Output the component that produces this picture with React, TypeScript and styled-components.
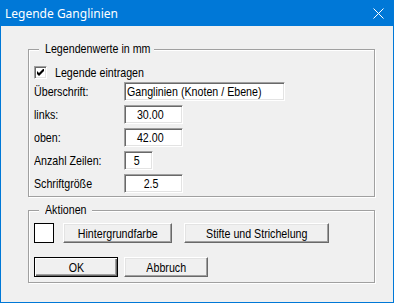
import React from "react";
import styled, { createGlobalStyle } from "styled-components";

const GlobalStyle = createGlobalStyle`
  html, body {
    margin: 0;
    padding: 0;
    background: #f0f0f0;
  }
  body {
    font-family: "Liberation Sans", Arial, sans-serif;
  }
`;

const Window = styled.div`
  width: 394px;
  height: 303px;
  box-sizing: border-box;
  border: 1px solid #0078d7;
  border-top: 0;
  background: #f0f0f0;
  display: flex;
  flex-direction: column;
`;

const TitleBar = styled.div`
  height: 26px;
  flex: none;
  display: flex;
  align-items: center;
  justify-content: space-between;
  padding: 0 9px 0 4px;
  background: #0078d7;
  color: #fff;
  font: 12px "Noto Sans", "Open Sans", sans-serif;
`;

const CloseIcon = () => (
  <svg width="11" height="11" viewBox="0 0 11 11">
    <path d="M0.5 0.5 L10.5 10.5 M10.5 0.5 L0.5 10.5" stroke="#fff" strokeWidth="1" />
  </svg>
);

// the dialog font is a narrow sans; squeeze Liberation Sans to Arial Narrow widths
const Narrow = styled.span<{ $origin?: string }>`
  display: inline-block;
  transform: scaleX(0.82);
  transform-origin: ${p => p.$origin ?? "left"} center;
`;

const Body = styled.div`
  flex: 1;
  display: flex;
  flex-direction: column;
  padding: 15px 18px 0 27px;
  font-size: 13px;
  color: #000;
`;

const Group = styled.fieldset<{ $top: number; $pad: string }>`
  margin: ${p => p.$top}px 0 0;
  padding: ${p => p.$pad};
  min-width: 0;
  border: 1px solid #a0a0a0;
  box-shadow: 1px 1px 0 #fff, inset 1px 1px 0 #fff;
`;

const Caption = styled.legend<{ $width: number }>`
  position: relative;
  box-sizing: border-box;
  width: ${p => p.$width}px;
  margin-left: 5px;
  padding: 0 0 0 6px;
  line-height: 16px;
  white-space: nowrap;
  background: #f0f0f0;
`;

const FormGrid = styled.div`
  display: grid;
  grid-template-columns: 90px 1fr;
  row-gap: 4px;
  align-items: center;
`;

const CheckRow = styled.label`
  grid-column: 1 / -1;
  display: flex;
  align-items: center;
  gap: 8px;
  height: 13px;
  margin-bottom: -1px;
  white-space: nowrap;
`;

const CheckBox = styled.span`
  flex: none;
  width: 13px;
  height: 13px;
  box-sizing: border-box;
  display: flex;
  align-items: center;
  justify-content: center;
  background: #fff;
  border: 1px solid;
  border-color: #a0a0a0 #fff #fff #a0a0a0;
  box-shadow: inset 1px 1px 0 #696969, inset -1px -1px 0 #e3e3e3;
`;

const Label = styled.span`
  line-height: 19px;
  white-space: nowrap;
`;

const Field = styled.div<{ $width: number; $align?: string; $padRight?: number }>`
  width: ${p => p.$width}px;
  height: 19px;
  box-sizing: border-box;
  padding: 0 ${p => p.$padRight ?? 0}px 0 2px;
  background: #fff;
  border: 1px solid;
  border-color: #a0a0a0 #fff #fff #a0a0a0;
  box-shadow: inset 1px 1px 0 #696969, inset -1px -1px 0 #e3e3e3;
  line-height: 17px;
  text-align: ${p => p.$align ?? "left"};
  white-space: nowrap;
  overflow: hidden;
`;

const ActionRow = styled.div`
  display: flex;
  align-items: center;
`;

const Swatch = styled.div`
  width: 20px;
  height: 20px;
  box-sizing: border-box;
  margin-right: 9px;
  background: #fff;
  border: 1px solid #000;
`;

const Button = styled.button<{ $width: number; $default?: boolean }>`
  width: ${p => p.$width}px;
  height: 20px;
  box-sizing: border-box;
  padding: 0;
  font: inherit;
  color: #000;
  white-space: nowrap;
  background: #f0f0f0;
  border: 1px solid;
  border-color: ${p => (p.$default ? "#000" : "#fff #696969 #696969 #fff")};
  box-shadow: ${p =>
    p.$default
      ? "inset 1px 1px 0 #fff, inset -1px -1px 0 #696969, inset -2px -2px 0 #a0a0a0"
      : "inset -1px -1px 0 #a0a0a0, inset 1px 1px 0 #e3e3e3"};

  & + & {
    margin-left: 12px;
  }
`;

const ButtonRow = styled.div`
  display: flex;
  gap: 6px;
  margin-top: 14px;

  ${Button} + ${Button} {
    margin-left: 0;
  }
`;

export default function App() {
  return (
    <>
      <GlobalStyle />
      <Window>
        <TitleBar>
          <span>Legende Ganglinien</span>
          <CloseIcon />
        </TitleBar>
        <Body>
          <Group $top={0} $pad="9px 0 3px 5px">
            <Caption $width={115}>
              <Narrow>Legendenwerte in mm</Narrow>
            </Caption>
            <FormGrid>
              <CheckRow>
                <CheckBox>
                  <svg width="7" height="7" viewBox="0 0 7 7">
                    <path d="M0 2 L0 5 L2 7 L7 2 L7 -1 L2 4 Z" fill="#000" />
                  </svg>
                </CheckBox>
                <Narrow>Legende eintragen</Narrow>
              </CheckRow>
              <Label><Narrow>Überschrift:</Narrow></Label>
              <Field $width={161}><Narrow>Ganglinien (Knoten / Ebene)</Narrow></Field>
              <Label><Narrow>links:</Narrow></Label>
              <Field $width={59} $align="center" $padRight={8}><Narrow $origin="center">30.00</Narrow></Field>
              <Label><Narrow>oben:</Narrow></Label>
              <Field $width={59} $align="center" $padRight={8}><Narrow $origin="center">42.00</Narrow></Field>
              <Label><Narrow>Anzahl Zeilen:</Narrow></Label>
              <Field $width={29} $align="center" $padRight={5}><Narrow $origin="center">5</Narrow></Field>
              <Label><Narrow>Schriftgröße</Narrow></Label>
              <Field $width={59} $align="center" $padRight={7}><Narrow $origin="center">2.5</Narrow></Field>
            </FormGrid>
          </Group>
          <Group $top={5} $pad="5px 0 5px 5px">
            <Caption $width={53}>
              <Narrow>Aktionen</Narrow>
            </Caption>
            <ActionRow>
              <Swatch />
              <Button $width={109}><Narrow $origin="center">Hintergrundfarbe</Narrow></Button>
              <Button $width={145}><Narrow $origin="center">Stifte und Strichelung</Narrow></Button>
            </ActionRow>
            <ButtonRow>
              <Button $width={84} $default><Narrow $origin="center">OK</Narrow></Button>
              <Button $width={84}><Narrow $origin="center">Abbruch</Narrow></Button>
            </ButtonRow>
          </Group>
        </Body>
      </Window>
    </>
  );
}
